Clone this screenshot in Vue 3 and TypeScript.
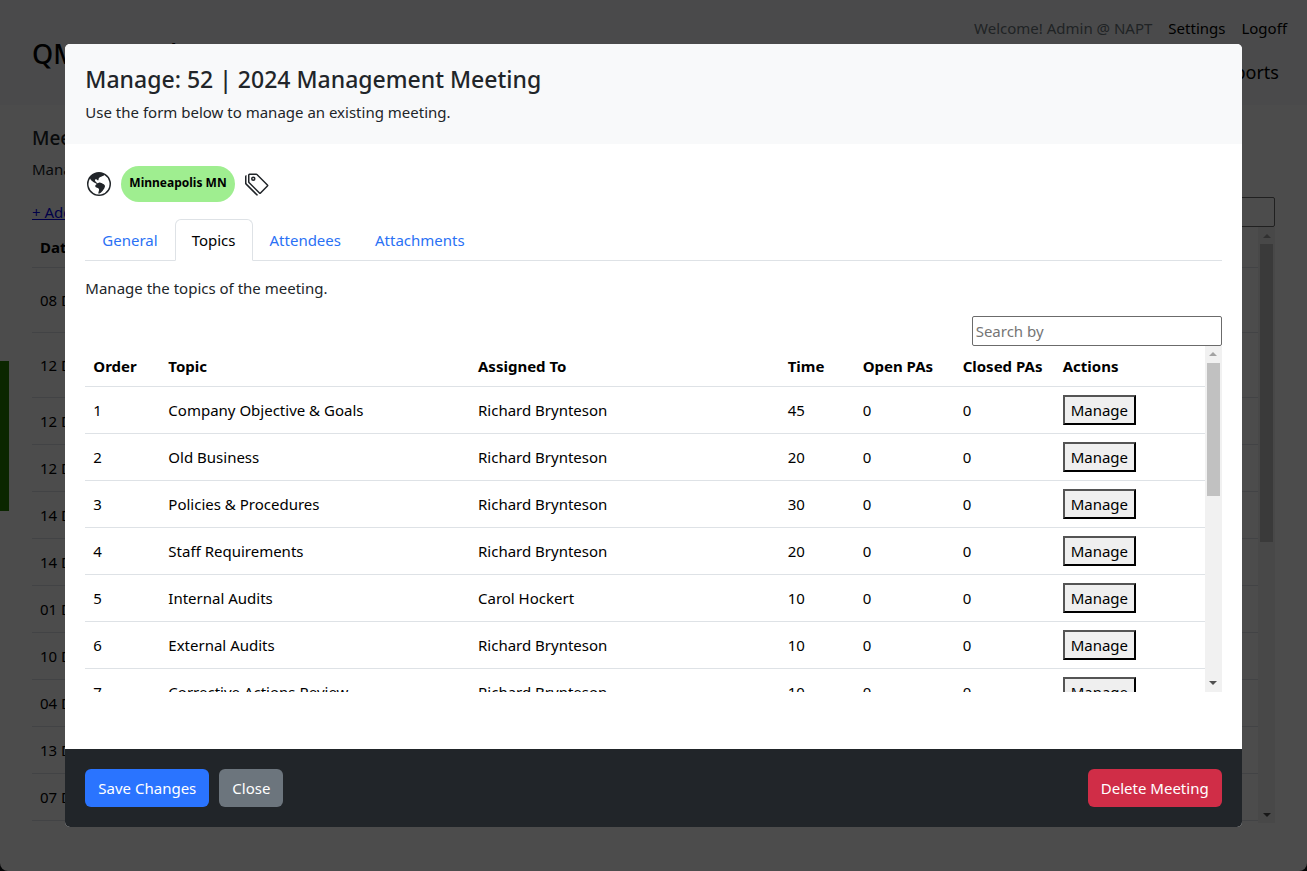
<script setup lang="ts">
import { ref } from 'vue'

interface Topic {
  order: number
  name: string
  owner: string
  time: number
  open: number
  closed: number
}

const tabs = ['General', 'Topics', 'Attendees', 'Attachments']
const activeTab = ref('Topics')
const search = ref('')

const topics: Topic[] = [
  { order: 1, name: 'Company Objective & Goals', owner: 'Richard Brynteson', time: 45, open: 0, closed: 0 },
  { order: 2, name: 'Old Business', owner: 'Richard Brynteson', time: 20, open: 0, closed: 0 },
  { order: 3, name: 'Policies & Procedures', owner: 'Richard Brynteson', time: 30, open: 0, closed: 0 },
  { order: 4, name: 'Staff Requirements', owner: 'Richard Brynteson', time: 20, open: 0, closed: 0 },
  { order: 5, name: 'Internal Audits', owner: 'Carol Hockert', time: 10, open: 0, closed: 0 },
  { order: 6, name: 'External Audits', owner: 'Richard Brynteson', time: 10, open: 0, closed: 0 },
  { order: 7, name: 'Corrective Actions Review', owner: 'Richard Brynteson', time: 10, open: 0, closed: 0 },
]

const meetings = [
  { date: '08 Dec', tall: true },
  { date: '12 Dec', tall: true },
  { date: '12 Dec', tall: false },
  { date: '12 Dec', tall: false },
  { date: '14 Dec', tall: false },
  { date: '14 Dec', tall: false },
  { date: '01 Dec', tall: false },
  { date: '10 Dec', tall: false },
  { date: '04 Dec', tall: false },
  { date: '13 Dec', tall: false },
  { date: '07 Dec', tall: false },
]
</script>

<template>
  <div class="app">
    <div class="page">
      <header class="site-header">
        <nav class="account">
          <span class="welcome">Welcome! Admin @ NAPT</span>
          <a href="#">Settings</a>
          <a href="#">Logoff</a>
        </nav>
        <div class="brand-row">
          <span class="brand">QMS Portal</span>
          <a class="reports" href="#">Reports</a>
        </div>
      </header>
      <main class="content">
        <h2>Meetings</h2>
        <p class="lead">Manage</p>
        <div class="toolbar">
          <a class="add" href="#">+ Add</a>
          <input class="search" type="text" aria-label="Search meetings" />
        </div>
        <div class="scroller list-scroller">
          <div class="viewport">
            <table>
              <thead>
                <tr><th>Date</th></tr>
              </thead>
              <tbody>
                <tr v-for="(m, i) in meetings" :key="i" :class="{ tall: m.tall }">
                  <td>{{ m.date }}</td>
                </tr>
              </tbody>
            </table>
          </div>
          <div class="bar" aria-hidden="true">
            <span class="arrow up"></span>
            <span class="track"><span class="thumb list-thumb"></span></span>
            <span class="arrow down"></span>
          </div>
        </div>
      </main>
      <div class="side-tab"></div>
    </div>

    <div class="backdrop">
      <section class="modal" role="dialog" aria-labelledby="modal-title">
        <header class="modal-header">
          <h1 id="modal-title">Manage: 52 | 2024 Management Meeting</h1>
          <p>Use the form below to manage an existing meeting.</p>
        </header>

        <div class="modal-body">
          <div class="tags">
            <svg class="icon" viewBox="0 0 16 16" aria-hidden="true">
              <path d="M8 0a8 8 0 1 0 0 16A8 8 0 0 0 8 0M2.04 4.326c.325 1.329 2.532 2.54 3.717 3.19.48.263.793.434.743.484q-.121.12-.242.234c-.416.396-.787.749-.758 1.266.035.634.618.824 1.214 1.017.577.188 1.168.38 1.286.983.082.417-.075.988-.22 1.52-.215.782-.406 1.48.22 1.48 1.5-.5 3.798-3.186 4-5 .138-1.243-2-2-3.5-2.5-.478-.16-.755.081-.99.284-.172.15-.322.279-.51.216-.445-.148-2.5-2-1.5-2.5.78-.39.952-.171 1.227.182.078.099.163.208.273.318.609.304.662-.132.723-.633.039-.322.081-.671.277-.867.434-.434 1.265-.791 2.028-1.12.712-.306 1.365-.587 1.579-.88A7 7 0 1 1 2.04 4.327Z" />
            </svg>
            <span class="pill">Minneapolis MN</span>
            <svg class="icon" viewBox="0 0 16 16" aria-hidden="true">
              <path d="M3 2v4.586l7 7L14.586 9l-7-7zM2 2a1 1 0 0 1 1-1h4.586a1 1 0 0 1 .707.293l7 7a1 1 0 0 1 0 1.414l-4.586 4.586a1 1 0 0 1-1.414 0l-7-7A1 1 0 0 1 2 6.586z" />
              <path d="M5.5 5a.5.5 0 1 1 0-1 .5.5 0 0 1 0 1m0 1a1.5 1.5 0 1 0 0-3 1.5 1.5 0 0 0 0 3M1 7.086a1 1 0 0 0 .293.707L8.75 15.25l-.043.043a1 1 0 0 1-1.414 0l-7-7A1 1 0 0 1 0 7.586V3a1 1 0 0 1 1-1z" />
            </svg>
          </div>

          <div class="tabs" role="tablist">
            <button
              v-for="t in tabs"
              :key="t"
              type="button"
              role="tab"
              class="tab"
              :class="{ active: t === activeTab }"
              :aria-selected="t === activeTab"
              @click="activeTab = t"
            >{{ t }}</button>
          </div>

          <p class="hint">Manage the topics of the meeting.</p>

          <div class="search-row">
            <input v-model="search" class="search" type="text" placeholder="Search by" aria-label="Search topics" />
          </div>

          <div class="scroller topic-scroller">
            <div class="viewport">
              <table>
                <colgroup>
                  <col class="c-small" /><col /><col /><col class="c-small" />
                  <col class="c-count" /><col class="c-count" /><col class="c-actions" />
                </colgroup>
                <thead>
                  <tr>
                    <th>Order</th>
                    <th>Topic</th>
                    <th>Assigned To</th>
                    <th>Time</th>
                    <th>Open PAs</th>
                    <th>Closed PAs</th>
                    <th>Actions</th>
                  </tr>
                </thead>
                <tbody>
                  <tr v-for="t in topics" :key="t.order">
                    <td>{{ t.order }}</td>
                    <td>{{ t.name }}</td>
                    <td>{{ t.owner }}</td>
                    <td>{{ t.time }}</td>
                    <td>{{ t.open }}</td>
                    <td>{{ t.closed }}</td>
                    <td><button type="button" class="manage">Manage</button></td>
                  </tr>
                </tbody>
              </table>
            </div>
            <div class="bar" aria-hidden="true">
              <span class="arrow up"></span>
              <span class="track"><span class="thumb topic-thumb"></span></span>
              <span class="arrow down"></span>
            </div>
          </div>
        </div>

        <footer class="modal-footer">
          <button type="button" class="btn primary">Save Changes</button>
          <button type="button" class="btn secondary">Close</button>
          <button type="button" class="btn danger">Delete Meeting</button>
        </footer>
      </section>
    </div>
  </div>
</template>

<style>
html,
body {
  margin: 0;
  background: #101214;
}
</style>

<style scoped>
.app,
.app * {
  box-sizing: border-box;
}
.app {
  font-family: 'Segoe UI', 'Noto Sans', sans-serif;
  font-size: 15px;
  line-height: 24px;
  color: #212529;
}
h1,
h2,
p {
  margin: 0;
}
button,
input {
  font: inherit;
}
.page {
  position: relative;
  height: 100vh;
  display: flex;
  flex-direction: column;
  overflow: hidden;
  background: #fff;
  border-radius: 0 0 8px 8px;
}
.site-header {
  height: 105px;
  flex: none;
  padding: 16px 20px 0 32px;
  background: #f8f9fa;
}
.account {
  display: flex;
  justify-content: flex-end;
  gap: 16px;
}
.account a,
.reports {
  color: #000;
  text-decoration: none;
}
.welcome {
  color: #6c757d;
}
.brand-row {
  display: flex;
  align-items: flex-start;
  justify-content: space-between;
  padding-right: 8px;
}
.brand {
  font-size: 27px;
  line-height: 28px;
  font-weight: 500;
  color: #000;
}
.reports {
  font-size: 18px;
  line-height: 64px;
}
.content {
  flex: 1;
  min-height: 0;
  display: flex;
  flex-direction: column;
  padding: 21px 32px 48px;
}
h2 {
  font-size: 19px;
  line-height: 24px;
  font-weight: 500;
}
.lead {
  margin-top: 7px;
}
.toolbar {
  display: flex;
  justify-content: space-between;
  align-items: center;
  margin-top: 16px;
}
.add {
  color: #0000ee;
}
.search {
  width: 250px;
  height: 30px;
  padding: 1px 3px;
  border: 1px solid #6b6b6b;
  border-radius: 2px;
  background: #fff;
  color: #000;
}
.search::placeholder {
  color: #757575;
}
.scroller {
  display: flex;
  overflow: hidden;
}
.list-scroller {
  flex: 1;
  min-height: 0;
}
.topic-scroller {
  height: 346px;
}
.viewport {
  flex: 1;
  min-width: 0;
  overflow: auto;
  scrollbar-width: none;
}
.bar {
  width: 17px;
  flex: none;
  display: flex;
  flex-direction: column;
  background: #f1f1f1;
}
.arrow {
  height: 17px;
  display: flex;
  align-items: center;
  justify-content: center;
}
.arrow::before {
  content: '';
  border: 4px solid transparent;
}
.arrow.up::before {
  border-top-width: 0;
  border-bottom-color: #a3a3a3;
}
.arrow.down::before {
  border-bottom-width: 0;
  border-top-color: #505050;
}
.track {
  flex: 1;
  padding: 0 2px;
}
.thumb {
  display: block;
  background: #c1c1c1;
}
.list-thumb {
  height: 53%;
}
.topic-thumb {
  height: 133px;
}
table {
  width: 100%;
  table-layout: fixed;
  border-collapse: separate;
  border-spacing: 0;
  color: #000;
}
th,
td {
  padding: 8px;
  text-align: left;
  vertical-align: middle;
  border-bottom: 1px solid #dee2e6;
}
th {
  font-weight: 700;
}
td {
  height: 47px;
}
.tall td {
  height: 65px;
}
.c-small {
  width: 75px;
}
.c-count {
  width: 100px;
}
.c-actions {
  width: 150px;
}
.side-tab {
  position: absolute;
  left: 0;
  top: 361px;
  width: 9px;
  height: 150px;
  background: #267f00;
}
.backdrop {
  position: fixed;
  inset: 0;
  display: flex;
  align-items: center;
  justify-content: center;
  background: rgba(0, 0, 0, 0.7);
}
.modal {
  width: 90%;
  height: 90%;
  display: flex;
  flex-direction: column;
  overflow: hidden;
  border-radius: 5px;
  background: #fff;
}
.modal-header {
  padding: 21px 20px 20px;
  background: #f8f9fa;
}
.modal-header h1 {
  font-size: 23px;
  line-height: 29px;
  font-weight: 500;
  margin-bottom: 6px;
}
.modal-body {
  flex: 1;
  min-height: 0;
  overflow: hidden;
  padding: 22px 20px;
}
.tags {
  display: flex;
  align-items: center;
  gap: 10px;
  padding-left: 2px;
}
.icon {
  width: 24px;
  height: 24px;
  fill: #212529;
}
.pill {
  height: 36px;
  padding: 0 8px;
  border-radius: 18px;
  background: #9fee90;
  color: #000;
  font-size: 12px;
  line-height: 34px;
  font-weight: 700;
}
.tabs {
  display: flex;
  margin-top: 17px;
  border-bottom: 1px solid #dee2e6;
}
.tab {
  height: 42px;
  margin-bottom: -1px;
  padding: 8px 16px;
  border: 1px solid transparent;
  border-radius: 6px 6px 0 0;
  background: transparent;
  color: #2a71f5;
}
.tab.active {
  border-color: #dee2e6 #dee2e6 #fff;
  background: #fff;
  color: #000;
}
.hint {
  margin-top: 15px;
}
.search-row {
  display: flex;
  justify-content: flex-end;
  margin-top: 16px;
}
.manage {
  display: block;
  height: 30px;
  padding: 1px 6px;
  border: 2px outset #000;
  background: #efefef;
  color: #000;
}
.modal-footer {
  display: flex;
  gap: 10px;
  padding: 20px;
  background: #212529;
}
.btn {
  height: 38px;
  padding: 0 13px;
  border: 0;
  border-radius: 6px;
  color: #fff;
}
.primary {
  background: #2a74ff;
}
.secondary {
  background: #6c757d;
}
.danger {
  margin-left: auto;
  background: #d02d47;
}
</style>
